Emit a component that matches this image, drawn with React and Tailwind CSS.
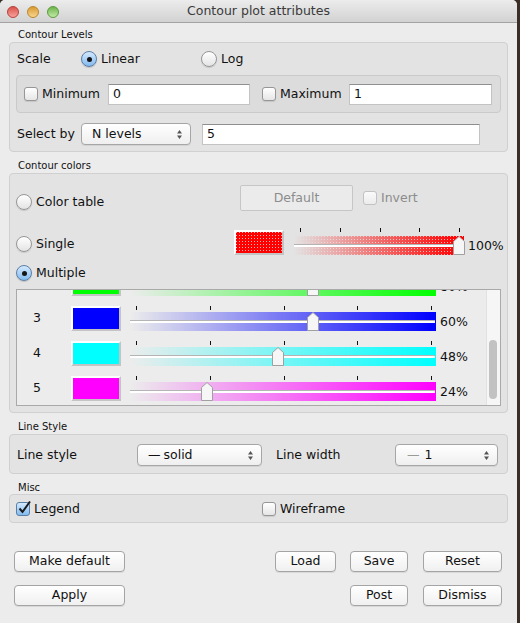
import React from "react";

const ui = "font-['DejaVu_Sans',sans-serif]";

// red with a light dot every 3px (base colour showing through red stripes)
const stipple =
  "bg-[#ffb4b4] bg-[image:repeating-linear-gradient(90deg,transparent_0_1px,#ff0000_1px_3px),repeating-linear-gradient(180deg,transparent_0_1px,#ff0000_1px_3px)]";

const Radio = ({ checked }) =>
  checked ? (
    <span className="flex h-[16px] w-[16px] shrink-0 items-center justify-center rounded-full border border-[#5b7ea6] bg-linear-to-b from-[#d4e9fd] to-[#82baf0] shadow-[0_1px_1px_rgba(0,0,0,0.15)]">
      <span className="h-[5px] w-[5px] rounded-full bg-[#151515]" />
    </span>
  ) : (
    <span className="h-[16px] w-[16px] shrink-0 rounded-full border border-[#969696] bg-linear-to-b from-white to-[#e4e4e4] shadow-[0_1px_1px_rgba(0,0,0,0.12)]" />
  );

const Check = ({ checked, disabled }) => {
  if (checked) {
    return (
      <span className="relative h-[14px] w-[14px] shrink-0 rounded-[3px] border border-[#5b7ea6] bg-linear-to-b from-[#d4e9fd] to-[#82baf0]">
        <svg className="absolute -top-[3px] left-0" width="15" height="15" viewBox="0 0 15 15">
          <path d="M2.5 8.5 L5.5 12 L13 1.5" fill="none" stroke="#1a1a1a" strokeWidth="2" />
        </svg>
      </span>
    );
  }
  return (
    <span
      className={
        disabled
          ? "h-[14px] w-[14px] shrink-0 rounded-[3px] border border-[#c2c2c2] bg-linear-to-b from-[#fafafa] to-[#ececec]"
          : "h-[14px] w-[14px] shrink-0 rounded-[3px] border border-[#969696] bg-linear-to-b from-white to-[#e6e6e6] shadow-[0_1px_1px_rgba(0,0,0,0.1)]"
      }
    />
  );
};

const Arrows = () => (
  <svg width="7" height="11" viewBox="0 0 7 11">
    <path d="M1 4.5 L3.5 1 L6 4.5 Z M1 6.5 L3.5 10 L6 6.5 Z" fill="#555" />
  </svg>
);

const Select = ({ className, children }) => (
  <div
    className={`flex h-[22px] items-center justify-between rounded-[4px] border border-[#a6a6a6] bg-linear-to-b from-white to-[#efefef] pl-[10px] pr-[7px] shadow-[0_1px_0_rgba(0,0,0,0.07)] ${className}`}
  >
    <span className="flex items-center">{children}</span>
    <Arrows />
  </div>
);

const Field = ({ className, value }) => (
  <div
    className={`flex h-[21px] items-center border border-[#c3c3c3] border-t-[#8f8f8f] bg-white pl-[4px] ${className}`}
  >
    {value}
  </div>
);

const Button = ({ className, children }) => (
  <div
    className={`flex h-[21px] items-center justify-center rounded-[4px] border border-[#a4a4a4] bg-linear-to-b from-white to-[#f0f0f0] shadow-[0_1px_0_rgba(0,0,0,0.08)] ${className}`}
  >
    {children}
  </div>
);

const Group = ({ className, children }) => (
  <div className={`rounded-[4px] border border-[#d0d0d0] bg-[#e3e3e3] ${className}`}>
    {children}
  </div>
);

const Label = ({ className, children }) => (
  <div className={`pl-[9px] text-[10px] leading-[12px] ${className}`}>{children}</div>
);

// slider: tick row, gradient band with groove, pentagon thumb
const Slider = ({ width, widthClass, tickClass, band, value }) => {
  const start = 6;
  const end = width - 5;
  const ticks = [0, 1, 2, 3, 4].map((i) => Math.round(start + (i * (end - start)) / 4));
  const thumb = Math.round(start + value * (end - start));
  return (
    <div className={`flex shrink-0 flex-col ${widthClass}`}>
      <div className={`relative ${tickClass}`}>
        {ticks.map((t) => (
          <span key={t} className="absolute top-[0px] h-[4px] w-px bg-[#111]" style={{ left: t }} />
        ))}
      </div>
      <div className="relative h-[19px]">
        <div className={`absolute inset-0 ${band}`} />
        <div className="absolute left-0 right-[1px] top-[8px] h-px bg-[#b4b4b4]" />
        <div className="absolute left-0 right-[1px] top-[9px] h-[2px] bg-white" />
        <svg
          className="absolute top-0"
          style={{ left: thumb - 6 }}
          width="12"
          height="19"
          viewBox="0 0 12 19"
        >
          <path d="M0.5 5.5 L6 0.5 L11.5 5.5 V18.5 H0.5 Z" fill="#f6f6f6" stroke="#a0a0a0" />
        </svg>
      </div>
    </div>
  );
};

const rows = [
  { n: "", swatch: "bg-[#00ff00]", band: "bg-linear-to-r/srgb from-transparent to-[#00ff00]", v: 0.6, p: "80%" },
  { n: "3", swatch: "bg-[#0000ff]", band: "bg-linear-to-r/srgb from-transparent to-[#0000ff]", v: 0.6, p: "60%" },
  { n: "4", swatch: "bg-[#00ffff]", band: "bg-linear-to-r/srgb from-transparent to-[#00ffff]", v: 0.48, p: "48%" },
  { n: "5", swatch: "bg-[#ff00ff]", band: "bg-linear-to-r/srgb from-transparent to-[#ff00ff]", v: 0.24, p: "24%" },
];

export default function App() {
  return (
    <div className={`flex h-[623px] w-[520px] bg-[#3a2e27] ${ui}`}>
      <div className="flex h-[623px] w-[517px] flex-col overflow-hidden rounded-t-[5px] bg-[#ececec] text-[12.5px] text-[#111]">
        {/* Title bar */}
        <div className="relative flex h-[23px] shrink-0 items-center justify-center border-b border-[#a3a3a3] bg-linear-to-b from-[#ececec] to-[#d2d2d2]">
          <div className="absolute left-[7px] top-[6px] flex gap-[8px]">
            <span className="h-[12px] w-[12px] rounded-full border border-[#b6403a] bg-linear-to-b from-[#d9524b] to-[#f7a09a]" />
            <span className="h-[12px] w-[12px] rounded-full border border-[#b9862b] bg-linear-to-b from-[#d99a2c] to-[#f8d58d]" />
            <span className="h-[12px] w-[12px] rounded-full border border-[#5c9a3b] bg-linear-to-b from-[#6cb44a] to-[#c2eaa6]" />
          </div>
          <span className="text-[12.5px] text-[#3a3a3a]">Contour plot attributes</span>
        </div>

        <div className="flex flex-col px-[9px]">
          {/* Contour Levels */}
          <Label className="h-[19px] pt-[6px]">Contour Levels</Label>
          <Group className="flex flex-col pb-[6px] pt-[8px]">
            <div className="flex h-[16px] items-center pl-[7px]">
              <span className="w-[64px]">Scale</span>
              <div className="flex w-[120px] items-center gap-[4px]">
                <Radio checked />
                <span>Linear</span>
              </div>
              <div className="flex items-center gap-[4px]">
                <Radio />
                <span>Log</span>
              </div>
            </div>
            <div className="ml-[6px] mt-[8px] flex h-[38px] w-[485px] items-center rounded-[4px] border border-[#cacaca] bg-[#dcdcdc] pl-[7px]">
              <Check />
              <span className="ml-[4px] w-[66px]">Minimum</span>
              <Field className="w-[142px]" value="0" />
              <div className="ml-[12px] flex items-center">
                <Check />
                <span className="ml-[4px] w-[69px]">Maximum</span>
              </div>
              <Field className="w-[143px]" value="1" />
            </div>
            <div className="mt-[10px] flex h-[22px] items-center pl-[7px]">
              <span className="w-[64px]">Select by</span>
              <Select className="w-[110px]">N levels</Select>
              <Field className="ml-[11px] w-[278px]" value="5" />
            </div>
          </Group>

          {/* Contour colors */}
          <Label className="h-[21px] pt-[8px]">Contour colors</Label>
          <Group className="flex flex-col pb-[6px] pt-[11px]">
            <div className="flex h-[26px] items-start pl-[6px]">
              <div className="mt-[8px] flex w-[224px] items-center gap-[4px]">
                <Radio />
                <span>Color table</span>
              </div>
              <div className="flex h-[26px] w-[113px] items-center justify-center rounded-[2px] border border-[#c6c6c6] bg-[#ebebeb] text-[#8c8c8c]">
                Default
              </div>
              <div className="ml-[10px] mt-[6px] flex items-center gap-[4px] text-[#8c8c8c]">
                <Check disabled />
                <span className="leading-[14px]">Invert</span>
              </div>
            </div>

            <div className="mt-[17px] flex h-[27px] items-start pl-[6px]">
              <div className="mt-[7px] flex w-[218px] items-center gap-[4px]">
                <Radio />
                <span>Single</span>
              </div>
              <div className={`mt-[2px] h-[25px] w-[50px] border-2 border-white border-b-[#c4c4c4] border-r-[#c4c4c4] ${stipple}`} />
              <div className="ml-[10px]">
                <Slider
                  width={170}
                  widthClass="w-[170px]"
                  tickClass="h-[8px]"
                  band={`${stipple} [mask-image:linear-gradient(to_right,transparent,black_97%)]`}
                  value={1}
                />
              </div>
              <span className="ml-[4px] mt-[8px] leading-[19px]">100%</span>
            </div>

            <div className="mt-[10px] flex h-[16px] items-center gap-[4px] pl-[6px]">
              <Radio checked />
              <span>Multiple</span>
            </div>

            {/* scrolling level list */}
            <div className="ml-[6px] mt-[8px] flex h-[117px] w-[485px] border border-[#a9a9a9] bg-[#ececec]">
              <div className="flex-1 overflow-hidden">
                <div className="-mt-[24px] flex flex-col">
                  {rows.map((r, i) => (
                    <div key={i} className="flex h-[35px] items-center">
                      <span className="w-[54px] pl-[16px]">{r.n}</span>
                      <div className={`h-[25px] w-[50px] border-2 border-white border-b-[#c4c4c4] border-r-[#c4c4c4] ${r.swatch}`} />
                      <div className="ml-[9px]">
                        <Slider width={306} widthClass="w-[306px]" tickClass="h-[6px]" band={r.band} value={r.v} />
                      </div>
                      <span className="ml-[4px] mt-[6px] leading-[19px]">{r.p}</span>
                    </div>
                  ))}
                </div>
              </div>
              <div className="flex w-[14px] flex-col border-l border-[#e2e2e2] bg-[#f6f6f6] px-[2px] pt-[50px]">
                <div className="h-[59px] w-[8px] rounded-full bg-[#c2c2c2]" />
              </div>
            </div>
          </Group>

          {/* Line Style */}
          <Label className="h-[21px] pt-[8px]">Line Style</Label>
          <Group className="flex h-[40px] items-start pl-[7px] pt-[9px]">
            <div className="flex h-[22px] items-center">
              <span className="w-[120px]">Line style</span>
              <Select className="w-[125px]">
                <span className="mr-[3px]">—</span>solid
              </Select>
              <span className="ml-[14px] w-[119px]">Line width</span>
              <Select className="w-[103px] pl-[11px]">
                <span className="mr-[5px] text-[#9a9a9a]">—</span>1
              </Select>
            </div>
          </Group>

          {/* Misc */}
          <Label className="h-[20px] pt-[8px]">Misc</Label>
          <Group className="flex h-[29px] items-start pl-[6px] pt-[6px]">
            <div className="flex h-[16px] w-[246px] items-center gap-[4px]">
              <Check checked />
              <span>Legend</span>
            </div>
            <div className="flex h-[16px] items-center gap-[4px]">
              <Check />
              <span>Wireframe</span>
            </div>
          </Group>

          {/* Buttons */}
          <div className="mt-[28px] flex items-center justify-between pl-[5px] pr-[6px]">
            <Button className="w-[111px]">Make default</Button>
            <div className="flex items-center">
              <Button className="w-[61px]">Load</Button>
              <Button className="ml-[14px] w-[58px]">Save</Button>
              <Button className="ml-[15px] w-[79px]">Reset</Button>
            </div>
          </div>
          <div className="mt-[13px] flex items-center justify-between pl-[5px] pr-[6px]">
            <Button className="w-[111px]">Apply</Button>
            <div className="flex items-center">
              <Button className="w-[58px]">Post</Button>
              <Button className="ml-[15px] w-[79px]">Dismiss</Button>
            </div>
          </div>
        </div>
      </div>
    </div>
  );
}
